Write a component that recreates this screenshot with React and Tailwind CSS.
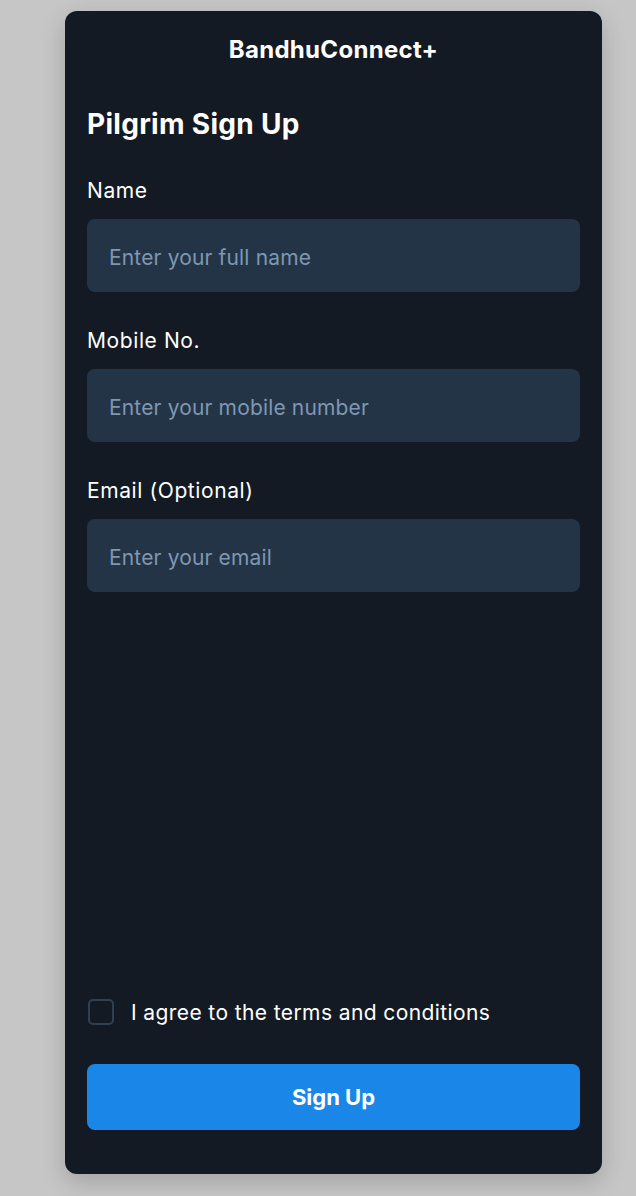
export default function App() {
  const font = { fontFamily: 'Inter, "Noto Sans", sans-serif' };
  const Field = ({ label, placeholder, first }) => (
    <div className={first ? "mt-[36px]" : "mt-[36px]"}>
      <div className="text-[21px] leading-[26px] text-white tracking-[0.6px]">{label}</div>
      <input
        className="mt-[15px] w-full h-[73px] rounded-[8px] bg-[#243447] px-[22px] pt-[3px] text-[21px] text-white placeholder:text-[#7f97b0] outline-none tracking-[0.15px]"
        placeholder={placeholder}
      />
    </div>
  );
  return (
    <div className="min-h-[1196px] bg-[#c6c6c6] pt-[11px]" style={font}>
      <div className="ml-[65px] w-[537px] h-[1163px] rounded-[12px] bg-[#131a23] shadow-[0_8px_24px_rgba(0,0,0,0.18)] pt-[24px] px-[22px] pb-[44px] flex flex-col">
        <div className="text-center text-white font-bold text-[24px] leading-[30px] tracking-[0.3px]">BandhuConnect+</div>
        <div className="mt-[41px] text-white font-bold text-[28px] leading-[36px] tracking-[0.3px]">Pilgrim Sign Up</div>
        <Field first label="Name" placeholder="Enter your full name" />
        <Field label="Mobile No." placeholder="Enter your mobile number" />
        <Field label="Email (Optional)" placeholder="Enter your email" />
        <div className="flex-1" />
        <label className="flex items-center gap-[17px] pl-[1px]">
          <span className="w-[26px] h-[26px] rounded-[5px] border-2 border-[#2f4055] shrink-0" />
          <span className="text-white text-[21px] leading-[28px] tracking-[0.4px] pt-[3px]">I agree to the terms and conditions</span>
        </label>
        <button className="mt-[37px] h-[66px] w-full rounded-[8px] bg-[#1a86e8] text-white font-bold text-[22px] pt-[1px]">Sign Up</button>
      </div>
    </div>
  );
}
